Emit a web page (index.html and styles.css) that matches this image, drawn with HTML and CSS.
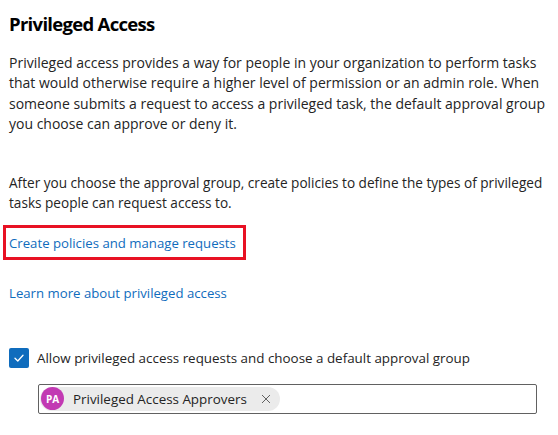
FILE: index.html
```html
<!DOCTYPE html>
<html lang="en">
<head>
    <meta charset="UTF-8">
    <title>Privileged Access</title>
    <link rel="stylesheet" href="styles.css">
</head>
<body>
    <div class="panel">
        <h1 class="title">Privileged Access</h1>

        <p class="text">Privileged access provides a way for people in your organization to perform tasks that would otherwise require a higher level of permission or an admin role. When someone submits a request to access a privileged task, the default approval group you choose can approve or deny it.</p>

        <p class="text second">After you choose the approval group, create policies to define the types of privileged tasks people can request access to.</p>

        <div class="highlight">
            <a href="#" class="link">Create policies and manage requests</a>
        </div>

        <a href="#" class="link learn">Learn more about privileged access</a>

        <label class="check-row">
            <span class="checkbox">
                <svg width="12" height="12" viewBox="0 0 12 12"><path d="M2 6.3 L4.8 9 L10 3.3" fill="none" stroke="#fff" stroke-width="1.3" stroke-linecap="round" stroke-linejoin="round"/></svg>
            </span>
            <span>Allow privileged access requests and choose a default approval group</span>
        </label>

        <div class="picker">
            <span class="pill">
                <span class="avatar">PA</span>
                <span class="pill-name">Privileged Access Approvers</span>
                <svg class="remove" width="10" height="10" viewBox="0 0 10 10"><path d="M1 1 L9 9 M9 1 L1 9" stroke="#616161" stroke-width="1"/></svg>
            </span>
        </div>
    </div>
</body>
</html>
```

FILE: styles.css
```css
body {
    margin: 0;
    background-color: #fff;
    font-family: 'Open Sans', 'Noto Sans', sans-serif;
    color: #242424;
}

.panel {
    padding: 10px 9px 0 9px;
}

.title {
    margin: 0;
    font-size: 18.5px;
    font-weight: 700;
    letter-spacing: -0.7px;
    line-height: 28px;
    color: #000;
}

.text {
    margin: 15px 0 0 0;
    font-size: 14px;
    line-height: 20.3px;
}

.text.second {
    margin-top: 39px;
    font-size: 13.6px;
}

.highlight {
    display: inline-block;
    margin: 11px 0 0 -6px;
    padding: 3px 7px 4px 3px;
    border: 3px solid #e81123;
}

.link {
    font-size: 13.2px;
    line-height: 20px;
    color: #0f6cbd;
    text-decoration: none;
}

.learn {
    display: block;
    margin-top: 23px;
}

.check-row {
    display: flex;
    align-items: center;
    gap: 8px;
    margin-top: 45px;
    font-size: 13.4px;
    line-height: 20px;
}

.checkbox {
    width: 20px;
    height: 20px;
    border-radius: 2px;
    background-color: #0f6cbd;
    display: flex;
    align-items: center;
    justify-content: center;
}

.picker {
    margin: 16px 12px 0 29px;
    height: 28px;
    border: 1px solid #616161;
    border-radius: 2px;
    display: flex;
    align-items: center;
    padding-left: 1px;
}

.pill {
    display: flex;
    align-items: center;
    height: 24px;
    background-color: #ebebeb;
    border-radius: 12px;
    padding-right: 9px;
}

.avatar {
    width: 23px;
    height: 23px;
    margin-left: 1px;
    border-radius: 50%;
    background-color: #c239b3;
    color: #fff;
    font-size: 10px;
    font-weight: 700;
    display: flex;
    align-items: center;
    justify-content: center;
}

.pill-name {
    margin-left: 9px;
    font-size: 13.4px;
}

.remove {
    margin-left: 14px;
}
```
